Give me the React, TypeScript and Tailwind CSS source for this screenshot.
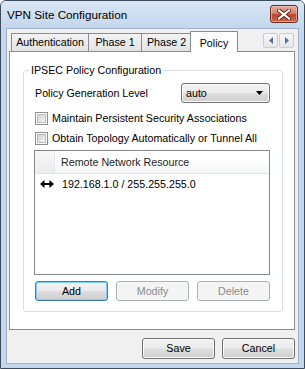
import React from "react";

const btnBase =
  "h-full w-[73px] rounded-[3px] flex items-center justify-center text-[10.7px]";
const normalBtn =
  btnBase +
  " border border-[#707070] text-black shadow-[inset_0_0_0_1px_#fbfbfb] bg-[linear-gradient(#f2f2f2_0%,#ebebeb_48%,#dddddd_52%,#cfcfcf_100%)]";
const defaultBtn =
  btnBase +
  " border border-[#3c7fb1] text-black shadow-[inset_0_0_0_1px_#7fd0f4] bg-[linear-gradient(#f2f2f2_0%,#ebebeb_48%,#dddddd_52%,#cfcfcf_100%)]";
const disabledBtn =
  btnBase + " border border-[#adb2b5] text-[#8b8b8b] bg-[#f4f4f4]";

function Checkbox() {
  return (
    <div className="w-[13px] h-[13px] border border-[#8e8f8f] bg-white p-[1px] shrink-0">
      <div className="w-full h-full border border-[#b8bbbf] bg-[linear-gradient(135deg,#cdd1d6_0%,#e6e8ea_60%,#f7f7f7_100%)]" />
    </div>
  );
}

function CloseButton() {
  return (
    <div className="w-[28px] h-[18px] rounded-[3px] border border-[#6b2a22] bg-[linear-gradient(#e8a99b_0%,#d7826f_45%,#c0432f_55%,#cf6a4d_100%)] flex items-center justify-center shadow-[inset_0_0_0_1px_rgba(255,220,210,0.5)]">
      <svg width="14" height="11" viewBox="0 0 14 11">
        <path d="M2 1.5 L12 9.5 M12 1.5 L2 9.5" stroke="#5a2018" strokeWidth="4" strokeLinecap="square" />
        <path d="M2 1.5 L12 9.5 M12 1.5 L2 9.5" stroke="#ffffff" strokeWidth="2.2" strokeLinecap="square" />
      </svg>
    </div>
  );
}

function ScrollArrow({ dir }: { dir: "left" | "right" }) {
  return (
    <div className="w-[15px] h-[15px] border border-[#c9cdd2] rounded-[2px] bg-[linear-gradient(#f7f7f7,#e6e6e6)] flex items-center justify-center">
      <svg width="4" height="7" viewBox="0 0 4 7">
        {dir === "left" ? (
          <path d="M4 0 L0 3.5 L4 7 Z" fill="#4d6fa8" />
        ) : (
          <path d="M0 0 L4 3.5 L0 7 Z" fill="#4d6fa8" />
        )}
      </svg>
    </div>
  );
}

function Tab({
  label,
  className,
}: {
  label: string;
  className: string;
}) {
  return (
    <div
      className={
        "h-[18px] border border-b-0 border-[#898c95] bg-[linear-gradient(#f3f3f3,#e3e3e3)] flex items-center justify-center text-[10.7px] text-black " +
        className
      }
    >
      {label}
    </div>
  );
}

export default function App() {
  return (
    <div
      className="w-[305px] h-[369px] flex flex-col border border-[#3e4b5b] rounded-t-[6px] bg-[#c4d7ee] overflow-hidden"
      style={{ fontFamily: "'Liberation Sans', Arial, sans-serif" }}
    >
      {/* Title bar */}
      <div className="h-[27px] shrink-0 flex items-center justify-between pl-[6px] pr-[6px] bg-[linear-gradient(#d9e6f5,#c4d7ee)]">
        <span className="text-[11.7px] text-black leading-[14px]">VPN Site Configuration</span>
        <div className="self-start mt-[4px]">
          <CloseButton />
        </div>
      </div>

      {/* Client area */}
      <div className="ml-[5px] mr-[5px] mb-[4px] flex-1 border border-[#9fb3cc] bg-[#f0f0f0] flex flex-col">
        {/* Tab strip */}
        <div className="h-[22px] shrink-0 flex items-end">
          <Tab label="Authentication" className="ml-[4px] w-[78px]" />
          <Tab label="Phase 1" className="-ml-px w-[54px]" />
          <Tab label="Phase 2" className="-ml-px w-[51px]" />
          <div className="relative z-10 -ml-[2px] -mb-px h-[21px] w-[48px] border border-b-0 border-[#898c95] bg-white flex items-start justify-center pt-[3px] text-[10.7px] text-black">
            Policy
          </div>
          <div className="ml-auto mr-[4px] self-start mt-[4px] flex gap-[1px]">
            <ScrollArrow dir="left" />
            <ScrollArrow dir="right" />
          </div>
        </div>

        {/* Tab panel */}
        <div className="ml-[2px] mr-[3px] h-[279px] shrink-0 border border-[#898c95] bg-white flex flex-col">
          <fieldset className="ml-[13px] mr-[11px] mt-[12px] border border-[#d5dfe5] rounded-[3px] pb-[10px]">
            <legend className="ml-[5px] px-[2px] text-[10.7px] leading-[13px] text-black">
              IPSEC Policy Configuration
            </legend>

            <div className="mt-[6px] h-[20px] pl-[11px] pr-[12px] flex items-center justify-between">
              <span className="text-[10.7px] text-black">Policy Generation Level</span>
              <div className="w-[89px] h-[20px] rounded-[3px] border border-[#707070] shadow-[inset_0_0_0_1px_#fbfbfb] bg-[linear-gradient(#f2f2f2_0%,#ebebeb_48%,#dddddd_52%,#cfcfcf_100%)] flex items-center justify-between pl-[4px] pr-[6px]">
                <span className="text-[10.7px] text-black">auto</span>
                <svg width="7" height="4" viewBox="0 0 7 4">
                  <path d="M0 0 L7 0 L3.5 4 Z" fill="#000" />
                </svg>
              </div>
            </div>

            <div className="mt-[5px] pl-[11px] flex flex-col">
              <div className="h-[20px] flex items-center gap-[4px]">
                <Checkbox />
                <span className="text-[10.7px] text-black">Maintain Persistent Security Associations</span>
              </div>
              <div className="h-[20px] flex items-center gap-[4px]">
                <Checkbox />
                <span className="text-[10.7px] text-black">Obtain Topology Automatically or Tunnel All</span>
              </div>
            </div>

            {/* List view */}
            <div className="mt-[2px] ml-[10px] mr-[12px] h-[125px] border border-[#828790] bg-white flex flex-col">
              <div className="h-[23px] shrink-0 flex border-b border-[#e5e5e5]">
                <div className="w-[20px] border-r border-[#e3e8ee] bg-[linear-gradient(#f7f7f7,#ececec)]" />
                <div className="flex-1 flex items-center pl-[6px] bg-[linear-gradient(#ffffff_0%,#ffffff_45%,#f3f4f6_100%)] text-[10.7px] text-[#1e1e1e]">
                  Remote Network Resource
                </div>
              </div>
              <div className="h-[20px] flex items-center">
                <div className="w-[20px] flex justify-end pr-[1px]">
                  <svg width="14" height="8" viewBox="0 0 14 8">
                    <path d="M3 4 H11" stroke="#000" strokeWidth="2" />
                    <path d="M0 4 L4.5 0 L4.5 8 Z" fill="#000" />
                    <path d="M14 4 L9.5 0 L9.5 8 Z" fill="#000" />
                  </svg>
                </div>
                <span className="ml-[7px] text-[10.7px] text-black">192.168.1.0 / 255.255.255.0</span>
              </div>
            </div>

            <div className="mt-[6px] ml-[11px] h-[20px] flex gap-[8px]">
              <div className={defaultBtn}>Add</div>
              <div className={disabledBtn}>Modify</div>
              <div className={disabledBtn}>Delete</div>
            </div>
          </fieldset>
        </div>

        {/* Bottom buttons */}
        <div className="mt-[8px] mr-[3px] h-[21px] flex justify-end gap-[7px]">
          <div className={normalBtn}>Save</div>
          <div className={normalBtn}>Cancel</div>
        </div>
      </div>
    </div>
  );
}
